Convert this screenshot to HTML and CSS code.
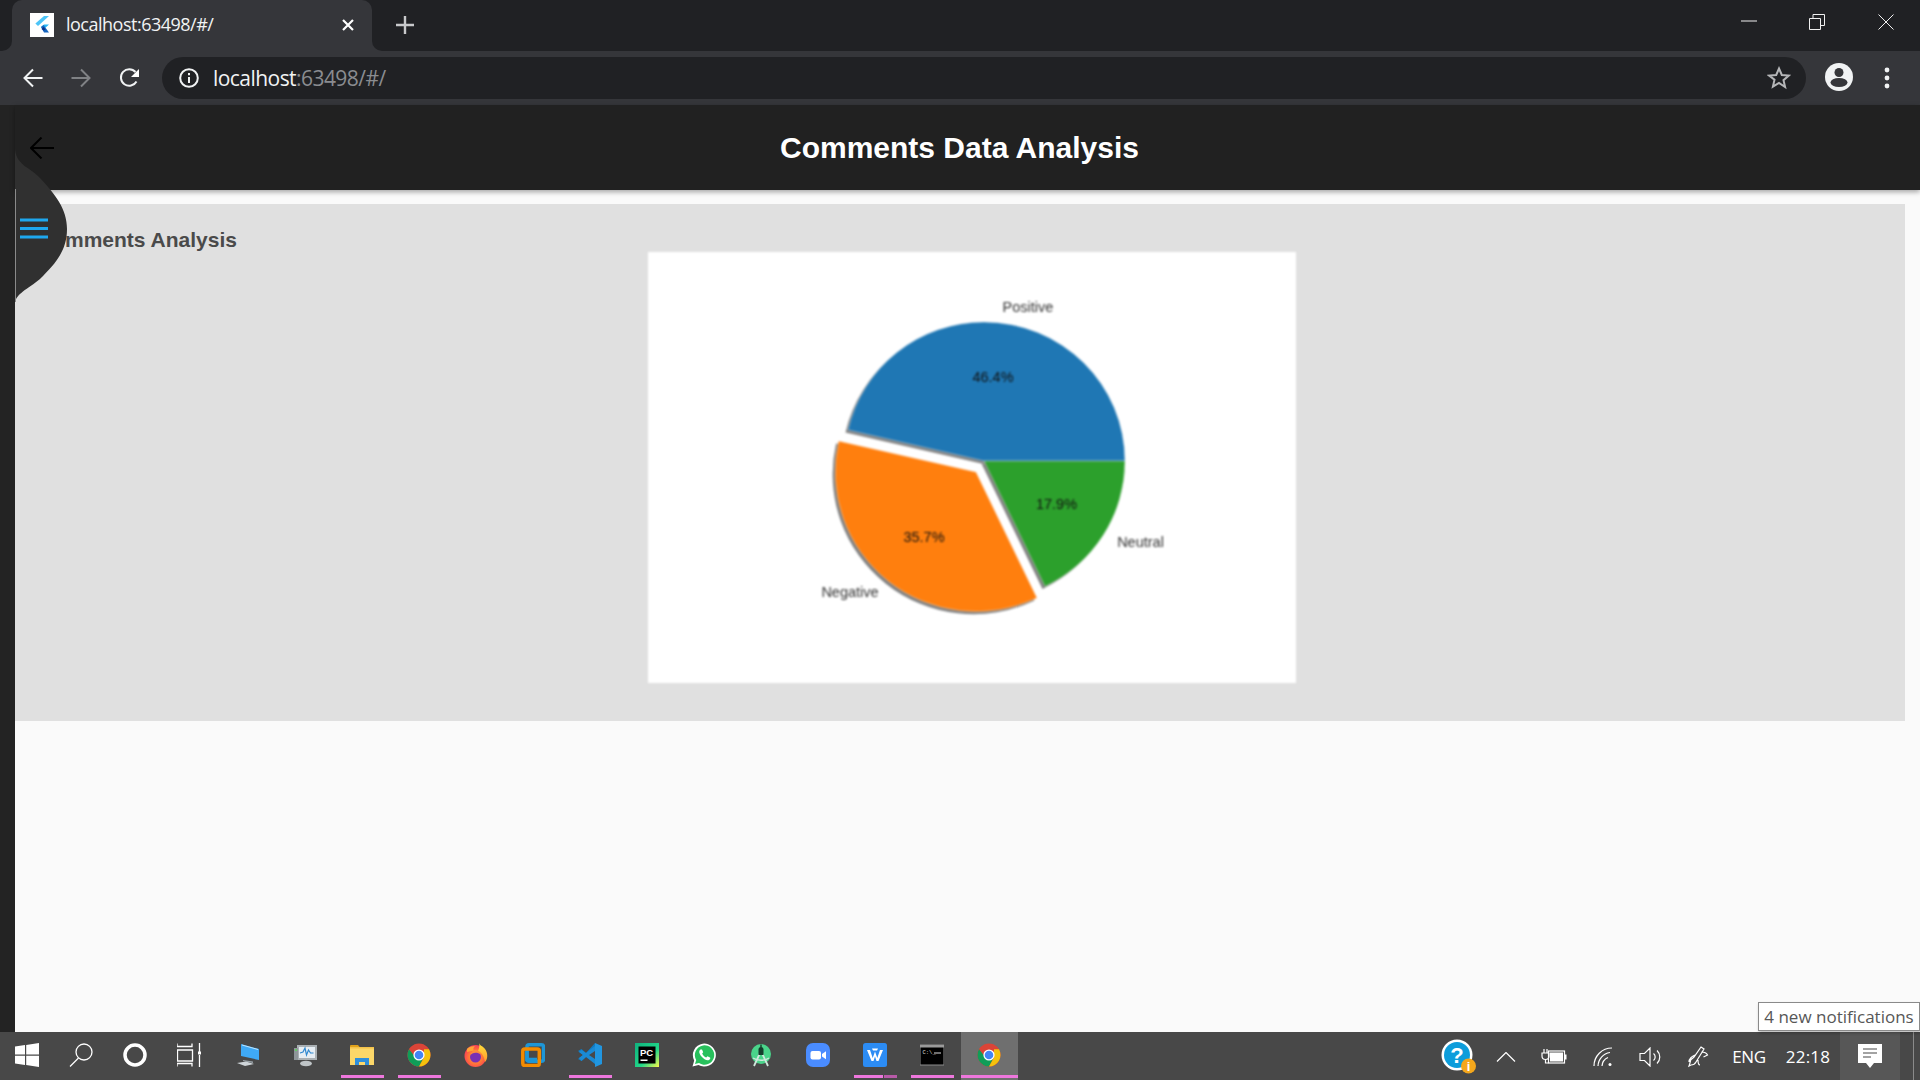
FILE: index.html
```html
<!DOCTYPE html>
<html lang="en">
<head>
<meta charset="utf-8">
<title>localhost:63498/#/</title>
<link rel="stylesheet" href="styles.css">
</head>
<body>
<svg class="defs" aria-hidden="true">
  <defs>
    <radialGradient id="ffg" cx="50%" cy="55%" r="60%"><stop offset="0" stop-color="#ffb02e"/><stop offset=".55" stop-color="#ff7139"/><stop offset="1" stop-color="#f5305f"/></radialGradient>
    <linearGradient id="ffh" x1="0" y1="0" x2="0" y2="1"><stop offset="0" stop-color="#ffe23a"/><stop offset="1" stop-color="#ff9a2e"/></linearGradient>
    <linearGradient id="pcg" x1="0" y1="0" x2="1" y2="1"><stop offset="0" stop-color="#0fb27e"/><stop offset=".6" stop-color="#21d789"/><stop offset="1" stop-color="#fcf84a"/></linearGradient>
    <symbol id="chrome" viewBox="0 0 24 24">
      <circle cx="12" cy="12" r="11.5" fill="#db4437"/>
      <path d="M2 6.300A11.500 11.500 0 0 0 12 23.500L16.500 15H9Z" fill="#0f9d58"/>
      <path d="M22 6.300A11.500 11.500 0 0 1 12 23.500L17 14.500V6.300Z" fill="#f4c20d"/>
      <circle cx="12" cy="12" r="5.600" fill="#fff"/>
      <circle cx="12" cy="12" r="4.300" fill="#4285f4"/>
    </symbol>
  </defs>
</svg>

<header class="tabstrip">
  <div class="tabstrip-gap"></div>
  <div class="tab">
    <svg class="favicon" viewBox="0 0 24 24">
      <rect width="24" height="24" fill="#fff"/>
      <path d="M14 3h5l-11 10-2.600-2.500z" fill="#4dc4f7"/>
      <path d="M14 11.500h5l-5.500 5 -2.500-2.500z" fill="#29b6f6"/>
      <path d="M11 14l2.500-2 5.500 7.500h-5z" fill="#1565c0"/>
      <path d="M11.500 16l2-2 2 2.500-2 1z" fill="#0d2f8a"/>
    </svg>
    <span class="tab-title">localhost:63498/#/</span>
    <svg class="tab-close" viewBox="0 0 12 12"><path d="M1 1l10 10M11 1L1 11"/></svg>
  </div>
  <div class="tabstrip-rest">
    <svg class="new-tab" viewBox="0 0 18 18"><path d="M9 0v18M0 9h18"/></svg>
    <div class="window-controls">
      <svg class="win-min" viewBox="0 0 16 16"><path d="M0 8h16"/></svg>
      <svg class="win-restore" viewBox="0 0 16 16"><path d="M.5 4.500h11v11H.5zM4 4.500V.5h11.500v11H11.500"/></svg>
      <svg class="win-close" viewBox="0 0 16 16"><path d="M.5.5l15 15M15.500.5l-15 15"/></svg>
    </div>
  </div>
</header>

<nav class="toolbar">
  <svg class="nav-icon" viewBox="0 0 20 20"><path d="M19.500 10H1.500M10 1.500L1.500 10l8.500 8.500"/></svg>
  <svg class="nav-icon nav-off" viewBox="0 0 20 20"><path d="M.5 10h18M10 1.500l8.500 8.500-8.500 8.500"/></svg>
  <svg class="nav-icon nav-reload" viewBox="0 0 22 20"><path d="M17.500 13.500A8.300 8.300 0 1 1 16.500 4"/><path class="solid" d="M20 1v8h-8z"/></svg>
  <div class="omnibox">
    <svg class="info" viewBox="0 0 20 20"><circle cx="10" cy="10" r="8.800"/><path d="M10 9v6M10 5v2.200"/></svg>
    <span class="url"><span class="url-host">localhost</span>:63498/#/</span>
    <svg class="star" viewBox="0 0 24 24"><path d="M12 2.500l2.800 6.500 7 .6-5.300 4.600 1.600 6.900L12 17l-6.100 3.600 1.600-6.900L2.200 9.600l7-.6z"/></svg>
  </div>
  <svg class="avatar" viewBox="0 0 28 28"><circle cx="14" cy="14" r="14" fill="#f1f3f4"/><circle cx="14" cy="9.500" r="4.500" fill="#35363a"/><ellipse cx="14" cy="19.500" rx="8.500" ry="4.500" fill="#35363a"/></svg>
  <svg class="dots" viewBox="0 0 6 22"><circle cx="3" cy="3" r="2.400"/><circle cx="3" cy="11" r="2.400"/><circle cx="3" cy="19" r="2.400"/></svg>
</nav>

<div class="page">
  <aside class="strip"></aside>
  <main class="app">
    <div class="appbar">
      <svg class="app-back" viewBox="0 0 24 22"><path d="M24 11H1M11.500 .5L1 11l10.500 10.500"/></svg>
      <h1 class="app-title">Comments Data Analysis</h1>
    </div>
    <section class="card">
      <h2 class="card-title">Comments Analysis</h2>
      <svg class="chart" viewBox="648 252 648 431">
        <rect x="648" y="252" width="648" height="431" fill="#fff"/>
        <g class="pie-shadow">
          <path d="M984 461H1125A141 139 0 0 0 984 322A139.500 139 0 0 0 848 430Z"/>
          <path d="M976 472L838.600 441A141 140 0 0 0 1037 598Z"/>
          <path d="M984 461L1045 586.400A141 139 0 0 0 1125 461Z"/>
        </g>
        <path class="wedge" fill="#1f77b4" d="M984 461H1125A141 139 0 0 0 984 322A139.500 139 0 0 0 848 430Z"/>
        <path class="wedge" fill="#ff7f0e" d="M976 472L838.600 441A141 140 0 0 0 1037 598Z"/>
        <path class="wedge" fill="#2ca02c" d="M984 461L1045 586.400A141 139 0 0 0 1125 461Z"/>
        <text class="pie-label" x="1028" y="311.500">Positive</text>
        <text class="pie-label" x="1140.500" y="546.500">Neutral</text>
        <text class="pie-label" x="850" y="596.500">Negative</text>
        <text class="pie-pct" x="993" y="381.500">46.4%</text>
        <text class="pie-pct" x="1056.500" y="508.500">17.9%</text>
        <text class="pie-pct" x="924" y="541.500">35.7%</text>
      </svg>
    </section>
  </main>
  <svg class="wave" viewBox="0 0 53 170">
    <path d="M0 8C0 26 15 28 25 39 40 55 52 70 52 90 52 112 40 125 25 140 13 150 0 155 0 165Z" fill="#303030"/>
    <path d="M.5 50V163" stroke="#8a8a8a" fill="none"/>
    <path class="burger" d="M5 81h28M5 89.500h28M5 98h28"/>
  </svg>
</div>

<footer class="taskbar">
  <div class="task-sys">
    <svg class="sys-icon" viewBox="0 0 24 24"><path fill="#fff" d="M0 3.500l10-1.400v9.400H0zM11.200 1.900L24 0v11.500H11.200zM0 12.700h10v9.300L0 20.600zM11.200 12.700H24V24l-12.800-1.900z"/></svg>
  </div>
  <div class="task-sys">
    <svg class="sys-icon line-icon" viewBox="0 0 24 24"><circle cx="15" cy="9" r="8"/><path d="M9.500 15L1 23.500"/></svg>
  </div>
  <div class="task-sys">
    <svg class="sys-icon" viewBox="0 0 24 24"><circle cx="12" cy="12" r="10" fill="none" stroke="#fff" stroke-width="3.500"/></svg>
  </div>
  <div class="task-sys task-sys-last">
    <svg class="sys-icon line-icon" viewBox="0 0 24 24"><path d="M0 .5v3h15v-3M.5 7h15v11H.5zM0 23.500v-3h15v3M22.500 0v9M22.500 12v12"/><rect class="solid" x="21" y="8.500" width="3" height="3"/></svg>
  </div>
  <div class="task-app">
    <svg class="app-icon" viewBox="0 0 24 24"><path d="M5 1l18 5v11L5 13z" fill="#3fa9f5"/><path d="M6 2l16 4.500" stroke="#bfe3fa" fill="none"/><path d="M7 17l10 1.500V20L7 18z" fill="#9aa4ab"/><path d="M1 20l9-1.500 8 2.500-9 2z" fill="#cfd5d9"/></svg>
  </div>
  <div class="task-app">
    <svg class="app-icon" viewBox="0 0 24 24"><rect x="4" y="2" width="20" height="15" fill="#a9afb3"/><rect x="6" y="4" width="16" height="11" fill="#e6edf3"/><path d="M7 10l3-1 2-4 1.500 7 2-5 2 3 3 0" stroke="#2f88d0" fill="none" stroke-width="1.200"/><rect x="1" y="5" width="4" height="12" fill="#8e9599"/><rect x="2" y="6" width="2" height="2" fill="#66cc66"/><ellipse cx="13" cy="20.500" rx="6" ry="2.800" fill="#bfc4c7"/></svg>
  </div>
  <div class="task-app is-open">
    <svg class="app-icon" viewBox="0 0 24 24"><path d="M0 3a1 1 0 0 1 1-1h7l2 2.500H0z" fill="#e0a21b"/><rect y="4" width="24" height="18" fill="#fcd769"/><rect y="4" width="24" height="1.500" fill="#f3c24a"/><path d="M5 22v-7h14v7h-4v-3H9v3z" fill="#2f8fdb"/></svg>
  </div>
  <div class="task-app is-open"><svg class="app-icon"><use href="#chrome"/></svg></div>
  <div class="task-app">
    <svg class="app-icon" viewBox="0 0 24 24"><circle cx="11.500" cy="13" r="11" fill="url(#ffg)"/><path d="M15 0c1 3 4 3 6 6 3 4 3 10 0 13-1-6-3-9-7-11 1-3 2-5 1-8z" fill="url(#ffh)"/><path d="M3 6c2-2 5-3 8-2.500-2 1-2 3-1 4L3 9z" fill="#ffa436"/><circle cx="11.500" cy="14" r="5.500" fill="#7a2fb4"/><path d="M6 12.500c2-3 7-4 11-1-1-3-3-4.500-5.500-4.500S7 9 6 12.500z" fill="#ff8a3c"/></svg>
  </div>
  <div class="task-app">
    <svg class="app-icon" viewBox="0 0 24 24"><rect x="6" y="1.800" width="16.500" height="16.500" rx="2" fill="none" stroke="#1e96d6" stroke-width="3.500"/><rect x="1.800" y="6" width="16.500" height="16.500" rx="2" fill="none" stroke="#f38b00" stroke-width="3.500"/><path d="M6 8v8.500h10" fill="none" stroke="#1e96d6" stroke-width="3.500"/></svg>
  </div>
  <div class="task-app is-open">
    <svg class="app-icon" viewBox="0 0 24 24"><path d="M17 0l7 3v18l-7 3z" fill="#2196e0"/><path d="M17 0v7L8 14 3.500 18 0 16l5-4L0 8l3.500-2L8 10z" fill="#0f7cc4"/><path d="M8 10l9-7v5l-6 4 6 4v5l-9-7-4.500 4L1 15l4-3-4-3 2.500-2z" fill="#1a8ad4"/></svg>
  </div>
  <div class="task-app">
    <svg class="app-icon" viewBox="0 0 24 24"><rect width="24" height="24" fill="url(#pcg)"/><rect x="3.500" y="3.500" width="17" height="17" fill="#000"/><text class="pc-text" x="5" y="12.500">PC</text><rect x="5.500" y="16.500" width="7" height="1.500" fill="#fff"/></svg>
  </div>
  <div class="task-app">
    <svg class="app-icon" viewBox="0 0 24 24"><path d="M.5 23.500l1.700-6A11.500 11.500 0 1 1 6.500 22z" fill="#fff"/><path d="M3 21l1.200-4A9.700 9.700 0 1 1 7 20z" fill="#28c05c"/><path d="M8.500 6.500c-2 1.500-1.500 4 1 7s5.500 4.500 7.500 3.500c1.500-.8 1.500-2.200 1-2.500l-2.500-1.300-1.300 1.300c-1.500-.5-3.500-2.300-4-4l1-1.300-1.200-2.700z" fill="#fff"/></svg>
  </div>
  <div class="task-app">
    <svg class="app-icon" viewBox="0 0 24 24"><circle cx="12" cy="11" r="10" fill="#4ad48a"/><path d="M5 23l7-15 7 15" fill="none" stroke="#cfe8dc" stroke-width="1.800"/><path d="M4 15c4 3 12 3 16 0" fill="none" stroke="#cfe8dc" stroke-width="1.500"/><path d="M9.500 6.500a2.500 2.500 0 0 1 5 0V12h-5z" fill="#153d2c"/><rect x="11.300" y="1.500" width="1.400" height="3" fill="#153d2c"/></svg>
  </div>
  <div class="task-app">
    <svg class="app-icon" viewBox="0 0 24 24"><rect width="24" height="24" rx="7" fill="#4a8cff"/><rect x="4.500" y="8" width="10.500" height="8.500" rx="2" fill="#fff"/><path d="M16 11l4-2.800v8.100L16 13.500z" fill="#fff"/></svg>
  </div>
  <div class="task-app is-open is-multi">
    <svg class="app-icon" viewBox="0 0 24 24"><rect width="24" height="24" rx="2.500" fill="#2c8cf4"/><path d="M4 7h3l2.700 8 2.300-6.500 2.300 6.500L17 7h3l-4.500 11h-2L12 13.500 10.500 18h-2z" fill="#fff"/><path d="M9 5.500h6l-1 2h-4z" fill="#fff"/></svg>
  </div>
  <div class="task-app is-open">
    <svg class="app-icon" viewBox="0 0 24 24"><rect y="2" width="24" height="20" fill="#000" stroke="#8b8b8b"/><rect y="2" width="24" height="2.500" fill="#9a9a9a"/><text class="cmd-text" x="2.500" y="10.500">C:\_</text><rect x="14" y="9.500" width="7" height="1" fill="#ddd"/></svg>
  </div>
  <div class="task-app is-open is-active"><svg class="app-icon"><use href="#chrome"/></svg></div>

  <div class="tray">
    <div class="tray-item tray-help">
      <svg class="help" viewBox="0 0 36 36"><circle cx="16" cy="16" r="15.500" fill="#fff"/><circle cx="16" cy="16" r="13" fill="#0d9ddb"/><text class="help-q" x="16" y="24">?</text><circle cx="27.500" cy="27" r="7.500" fill="#f4a71c"/><text class="help-i" x="27.500" y="32">i</text></svg>
    </div>
    <div class="tray-item">
      <svg class="tray-icon chev" viewBox="0 0 20 10"><path d="M1 9.500l9-9 9 9"/></svg>
    </div>
    <div class="tray-item">
      <svg class="tray-icon battery" viewBox="0 0 26 18"><path d="M1 5h7v3a3 3 0 0 1-7 0zM3 1v4M6 1v4M4.500 11v4h3"/><rect x="7.500" y="3" width="16" height="12"/><rect class="solid" x="9" y="4.500" width="13" height="9"/><rect class="solid" x="24" y="6.500" width="1.500" height="5"/></svg>
    </div>
    <div class="tray-item tray-wifi">
      <svg class="tray-icon wifi" viewBox="0 0 20 20"><path d="M1 19A18 18 0 0 1 19 1M5 19A14 14 0 0 1 17 5.500M9 19a10 10 0 0 1 6-8.500"/><circle class="solid" cx="17" cy="17.500" r="1.500"/></svg>
    </div>
    <div class="tray-item tray-vol">
      <svg class="tray-icon vol" viewBox="0 0 24 20"><path d="M1 6.500h4.500L11 1v18l-5.500-5.500H1zM14.500 6.500a4.500 4.500 0 0 1 0 7M18 3.500a9 9 0 0 1 0 13"/></svg>
    </div>
    <div class="tray-item">
      <svg class="tray-icon pen" viewBox="0 0 22 22"><path d="M14 1l3 2-8 13c-1 2-3 3-5 3l-2 1 1-3c0-2 1-4 3-5l1-1zM14.500 6c2 0 5 1 6 3l-4 2M8 9c-3 1-6 4-6 7M11 14c0 3 1 5 2 5"/></svg>
    </div>
    <div class="tray-item tray-eng">ENG</div>
    <div class="tray-item tray-time">22:18</div>
    <div class="tray-item tray-notif">
      <svg class="notif" viewBox="0 0 24 24"><path fill="#fff" d="M0 0h24v19h-8l-4 5-4-5H0z"/><path d="M5 5h14M5 9h14M5 13h8" stroke="#484848" stroke-width="1.200"/></svg>
    </div>
    <div class="tray-desktop"></div>
  </div>
  <div class="tooltip">4 new notifications</div>
</footer>
</body>
</html>
```
FILE: styles.css
```css
* { box-sizing: border-box; }
html, body { margin: 0; padding: 0; }
body {
  width: 1920px;
  height: 1080px;
  overflow: hidden;
  display: flex;
  flex-direction: column;
  font-family: "Liberation Sans", Arial, sans-serif;
  background: #fafafa;
}
.defs { position: absolute; width: 0; height: 0; }
svg { display: block; flex: none; }
.solid { fill: #fff; stroke: none; }

/* Tab strip */
.tabstrip {
  height: 51px;
  flex: none;
  display: flex;
  align-items: stretch;
  background: linear-gradient(#202124 50%, #35363a 50%);
}
.tabstrip-gap {
  width: 12px;
  background: #202124;
  border-bottom-right-radius: 10px;
}
.tab {
  width: 360px;
  display: flex;
  align-items: center;
  padding: 0 0 1px 18px;
  background: #35363a;
  border-radius: 10px 10px 0 0;
}
.favicon { width: 24px; height: 24px; }
.tab-title {
  margin: -2px 0 0 12px;
  font: 18px "Open Sans", sans-serif;
  letter-spacing: -0.5px;
  color: #f1f3f4;
}
.tab-close {
  width: 12px;
  height: 12px;
  margin-left: auto;
  margin-right: 18px;
  stroke: #fff;
  stroke-width: 2.2;
  fill: none;
}
.tabstrip-rest {
  flex: 1;
  display: flex;
  align-items: flex-start;
  background: #202124;
  border-bottom-left-radius: 10px;
}
.new-tab {
  width: 18px;
  height: 18px;
  margin: 16px 0 0 24px;
  stroke: #c8c9cb;
  stroke-width: 2.4;
  fill: none;
}
.window-controls {
  margin-left: auto;
  display: flex;
  align-items: flex-start;
  padding-top: 14px;
}
.window-controls svg { width: 16px; height: 16px; stroke: #f0f0f0; fill: none; }
.win-min { margin-right: 52px; margin-top: -1px; }
.win-restore { margin-right: 53px; }
.win-close { margin-right: 26px; }

/* Toolbar */
.toolbar {
  height: 54px;
  flex: none;
  display: flex;
  align-items: center;
  padding-left: 23px;
  background: #35363a;
}
.nav-icon {
  width: 20px;
  height: 20px;
  margin: -1px 28px 0 0;
  stroke: #f1f3f4;
  stroke-width: 2;
  fill: none;
}
.nav-off { stroke: #808285; }
.nav-reload { width: 22px; margin-right: 21px; }
.omnibox {
  width: 1644px;
  height: 42px;
  display: flex;
  align-items: center;
  padding-left: 17px;
  background: #202124;
  border-radius: 21px;
}
.info {
  width: 20px;
  height: 20px;
  stroke: #f1f3f4;
  stroke-width: 2;
  fill: none;
}
.url {
  margin-left: 14px;
  font: 21px "Open Sans", sans-serif;
  letter-spacing: -0.55px;
  color: #8a8c90;
}
.url-host { color: #f1f3f4; }
.star {
  width: 24px;
  height: 24px;
  margin-left: auto;
  margin-right: 15px;
  stroke: #b5b6b8;
  stroke-width: 2;
  fill: none;
}
.avatar { width: 28px; height: 28px; margin: -3px 0 0 19px; }
.dots { width: 6px; height: 22px; margin: -1px 0 0 31px; fill: #f1f3f4; }

/* Page */
.page {
  flex: 1;
  display: flex;
  position: relative;
  min-height: 0;
}
.strip { width: 15px; flex: none; background: #232323; }
.app { flex: 1; min-width: 0; background: #fafafa; }
.appbar {
  height: 85px;
  display: flex;
  align-items: center;
  position: relative;
  background: #212121;
  box-shadow: 0 2px 5px rgba(0, 0, 0, 0.35);
}
.app-back {
  width: 24px;
  height: 22px;
  margin-left: 15px;
  stroke: #000;
  stroke-width: 2;
  fill: none;
}
.app-title {
  margin: 0 0 0 726px;
  font-size: 30px;
  font-weight: 700;
  color: #fff;
  white-space: nowrap;
}
.card {
  width: 1890px;
  height: 517px;
  margin-top: 14px;
  padding: 23px 0 0 22px;
  background: #e0e0e0;
}
.card-title {
  margin: 0;
  font-size: 21px;
  line-height: 25px;
  font-weight: 700;
  color: #4a4a4a;
}
.chart {
  width: 648px;
  height: 431px;
  margin-left: 611px;
  filter: blur(0.8px);
}
.pie-shadow { fill: #808080; transform: translate(-2.500px, 2.500px); }
.wedge { stroke: #fff; stroke-opacity: 0.45; stroke-width: 0.8; }
.pie-label, .pie-pct {
  font-family: "Liberation Sans", sans-serif;
  font-size: 14.5px;
  text-anchor: middle;
  fill: #333;
}
.pie-pct { fill: #111; }
.wave {
  position: absolute;
  left: 15px;
  top: 34px;
  width: 53px;
  height: 170px;
}
.burger { stroke: #1ea7ee; stroke-width: 3.200; fill: none; }

/* Taskbar */
.taskbar {
  height: 48px;
  flex: none;
  display: flex;
  position: relative;
  background: #484848;
}
.task-sys {
  width: 54px;
  display: flex;
  align-items: center;
  justify-content: center;
  padding-bottom: 2px;
}
.task-sys-last { margin-right: 3.500px; }
.sys-icon { width: 24px; height: 24px; }
.line-icon { stroke: #fff; stroke-width: 1.300; fill: none; }
.task-app {
  width: 57px;
  position: relative;
  display: flex;
  align-items: center;
  justify-content: center;
  padding-bottom: 2px;
}
.app-icon { width: 24px; height: 24px; }
.is-open::after {
  content: "";
  position: absolute;
  left: 7px;
  right: 7px;
  bottom: 2px;
  height: 3px;
  background: #ee77dd;
}
.is-multi::after {
  background: linear-gradient(90deg, #ee77dd 0 67%, #484848 67% 70%, #b85aa8 70%);
}
.is-active { background: #6f6f6f; }
.is-active::after { left: 0; right: 0; }
.pc-text {
  font: 700 9.500px "Liberation Sans", sans-serif;
  fill: #fff;
}
.cmd-text {
  font: 5.500px "Liberation Mono", monospace;
  fill: #ddd;
}
.tray {
  margin-left: auto;
  display: flex;
  color: #fff;
}
.tray-item {
  width: 48px;
  display: flex;
  align-items: center;
  justify-content: center;
  padding-top: 2px;
}
.tray-wifi { width: 50px; }
.tray-vol { width: 46px; }
.tray-eng { width: 54px; padding-top: 0; font: 17px "Open Sans", sans-serif; letter-spacing: -0.3px; }
.tray-time { width: 64px; padding-top: 0; font: 17px "Open Sans", sans-serif; letter-spacing: 0.2px; }
.tray-notif { width: 60px; background: #575757; padding-top: 0; }
.tray-desktop { width: 20px; position: relative; }
.tray-desktop::after {
  content: "";
  position: absolute;
  left: 13px;
  top: 0;
  bottom: 0;
  width: 1px;
  background: #8a8a8a;
}
.help { width: 36px; height: 36px; margin: -1px 0 0 2px; }
.help-q { font: 700 22px "Liberation Sans", sans-serif; fill: #fff; text-anchor: middle; }
.help-i { font: 700 13px "Liberation Sans", sans-serif; fill: #fff; text-anchor: middle; }
.tray-icon { stroke: #fff; stroke-width: 1.200; fill: none; }
.chev { width: 20px; height: 10px; }
.battery { width: 26px; height: 18px; }
.wifi { width: 20px; height: 20px; }
.vol { width: 24px; height: 20px; }
.pen { width: 22px; height: 22px; }
.notif { width: 24px; height: 24px; margin-top: -1px; }
.tooltip {
  position: absolute;
  right: 0;
  top: -30px;
  width: 162px;
  height: 29px;
  display: flex;
  align-items: center;
  justify-content: center;
  background: #fff;
  border: 1px solid #8a8a8a;
  box-shadow: 1px 2px 3px rgba(0, 0, 0, 0.25);
  font: 17px "Open Sans", sans-serif;
  color: #575757;
}
```
